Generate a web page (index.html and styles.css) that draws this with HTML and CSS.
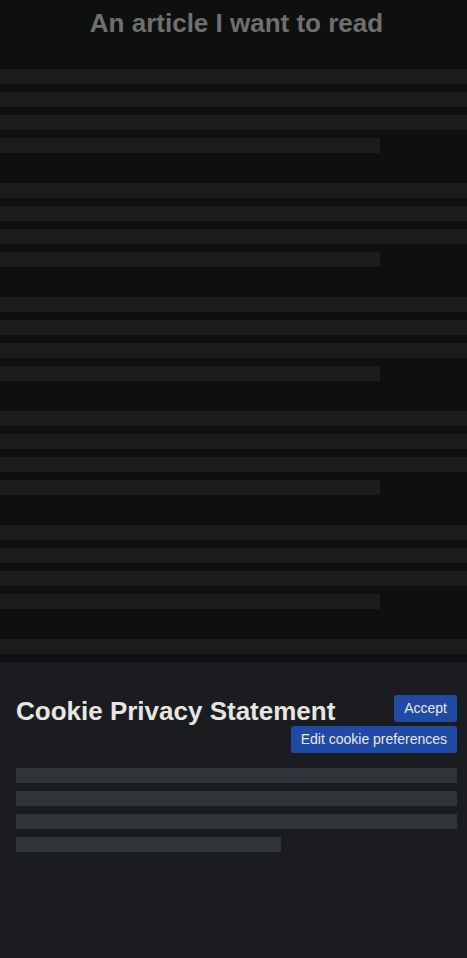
FILE: index.html
```html
<!DOCTYPE html>
<html lang="en">
<head>
<meta charset="utf-8">
<title>Article</title>
<link rel="stylesheet" href="styles.css">
</head>
<body>
<main class="article">
  <h1 class="article-title">An article I want to read</h1>
  <div class="paragraphs">
    <div class="para"><div class="line"></div><div class="line"></div><div class="line"></div><div class="line short"></div></div>
    <div class="para"><div class="line"></div><div class="line"></div><div class="line"></div><div class="line short"></div></div>
    <div class="para"><div class="line"></div><div class="line"></div><div class="line"></div><div class="line short"></div></div>
    <div class="para"><div class="line"></div><div class="line"></div><div class="line"></div><div class="line short"></div></div>
    <div class="para"><div class="line"></div><div class="line"></div><div class="line"></div><div class="line short"></div></div>
    <div class="para"><div class="line"></div><div class="line"></div><div class="line"></div><div class="line short"></div></div>
  </div>
</main>
<section class="cookie-panel">
  <div class="cookie-head">
    <h2 class="cookie-title">Cookie Privacy Statement</h2>
    <div class="cookie-actions">
      <button class="btn">Accept</button>
      <button class="btn">Edit cookie preferences</button>
    </div>
  </div>
  <div class="cookie-text">
    <div class="cline"></div>
    <div class="cline"></div>
    <div class="cline"></div>
    <div class="cline short"></div>
  </div>
</section>
</body>
</html>
```
FILE: styles.css
```css
* { box-sizing: border-box; }
html, body { margin: 0; padding: 0; }
body {
  background: #0e1010;
  font-family: "Liberation Sans", Arial, sans-serif;
  height: 958px;
  overflow: hidden;
}
.article { padding-top: 8px; }
.article-title {
  margin: 0 0 31px;
  padding-left: 6px;
  font-size: 26px;
  line-height: 30px;
  font-weight: bold;
  text-align: center;
  color: #6f6f6f;
}
.paragraphs { display: flex; flex-direction: column; gap: 30px; }
.para { display: flex; flex-direction: column; gap: 8px; }
.line { height: 15px; background: #1b1c1e; width: 100%; }
.line.short { width: 380px; }

.cookie-panel {
  position: fixed;
  left: 0; right: 0; bottom: 0;
  height: 296px;
  background: #1b1c1f;
  padding: 33px 10px 0 16px;
}
.cookie-head { display: grid; grid-template-columns: 1fr; }
.cookie-title {
  grid-area: 1 / 1;
  align-self: start;
  margin: 1px 0 0;
  font-size: 26px;
  line-height: 30px;
  font-weight: bold;
  color: #e8e6e3;
  white-space: nowrap;
}
.cookie-actions {
  grid-area: 1 / 1;
  justify-self: end;
  display: flex;
  flex-direction: column;
  align-items: flex-end;
  gap: 4px;
}
.btn {
  font-family: "Liberation Sans", Arial, sans-serif;
  font-size: 14px;
  line-height: 17px;
  height: 27px;
  padding: 5px 10px;
  border: 0;
  border-radius: 3px;
  background: #214aa6;
  color: #e8e6e3;
  white-space: nowrap;
}
.cookie-text { margin-top: 15px; display: flex; flex-direction: column; gap: 8px; }
.cline { height: 15px; background: #313437; width: 441px; }
.cline.short { width: 265px; }
```
